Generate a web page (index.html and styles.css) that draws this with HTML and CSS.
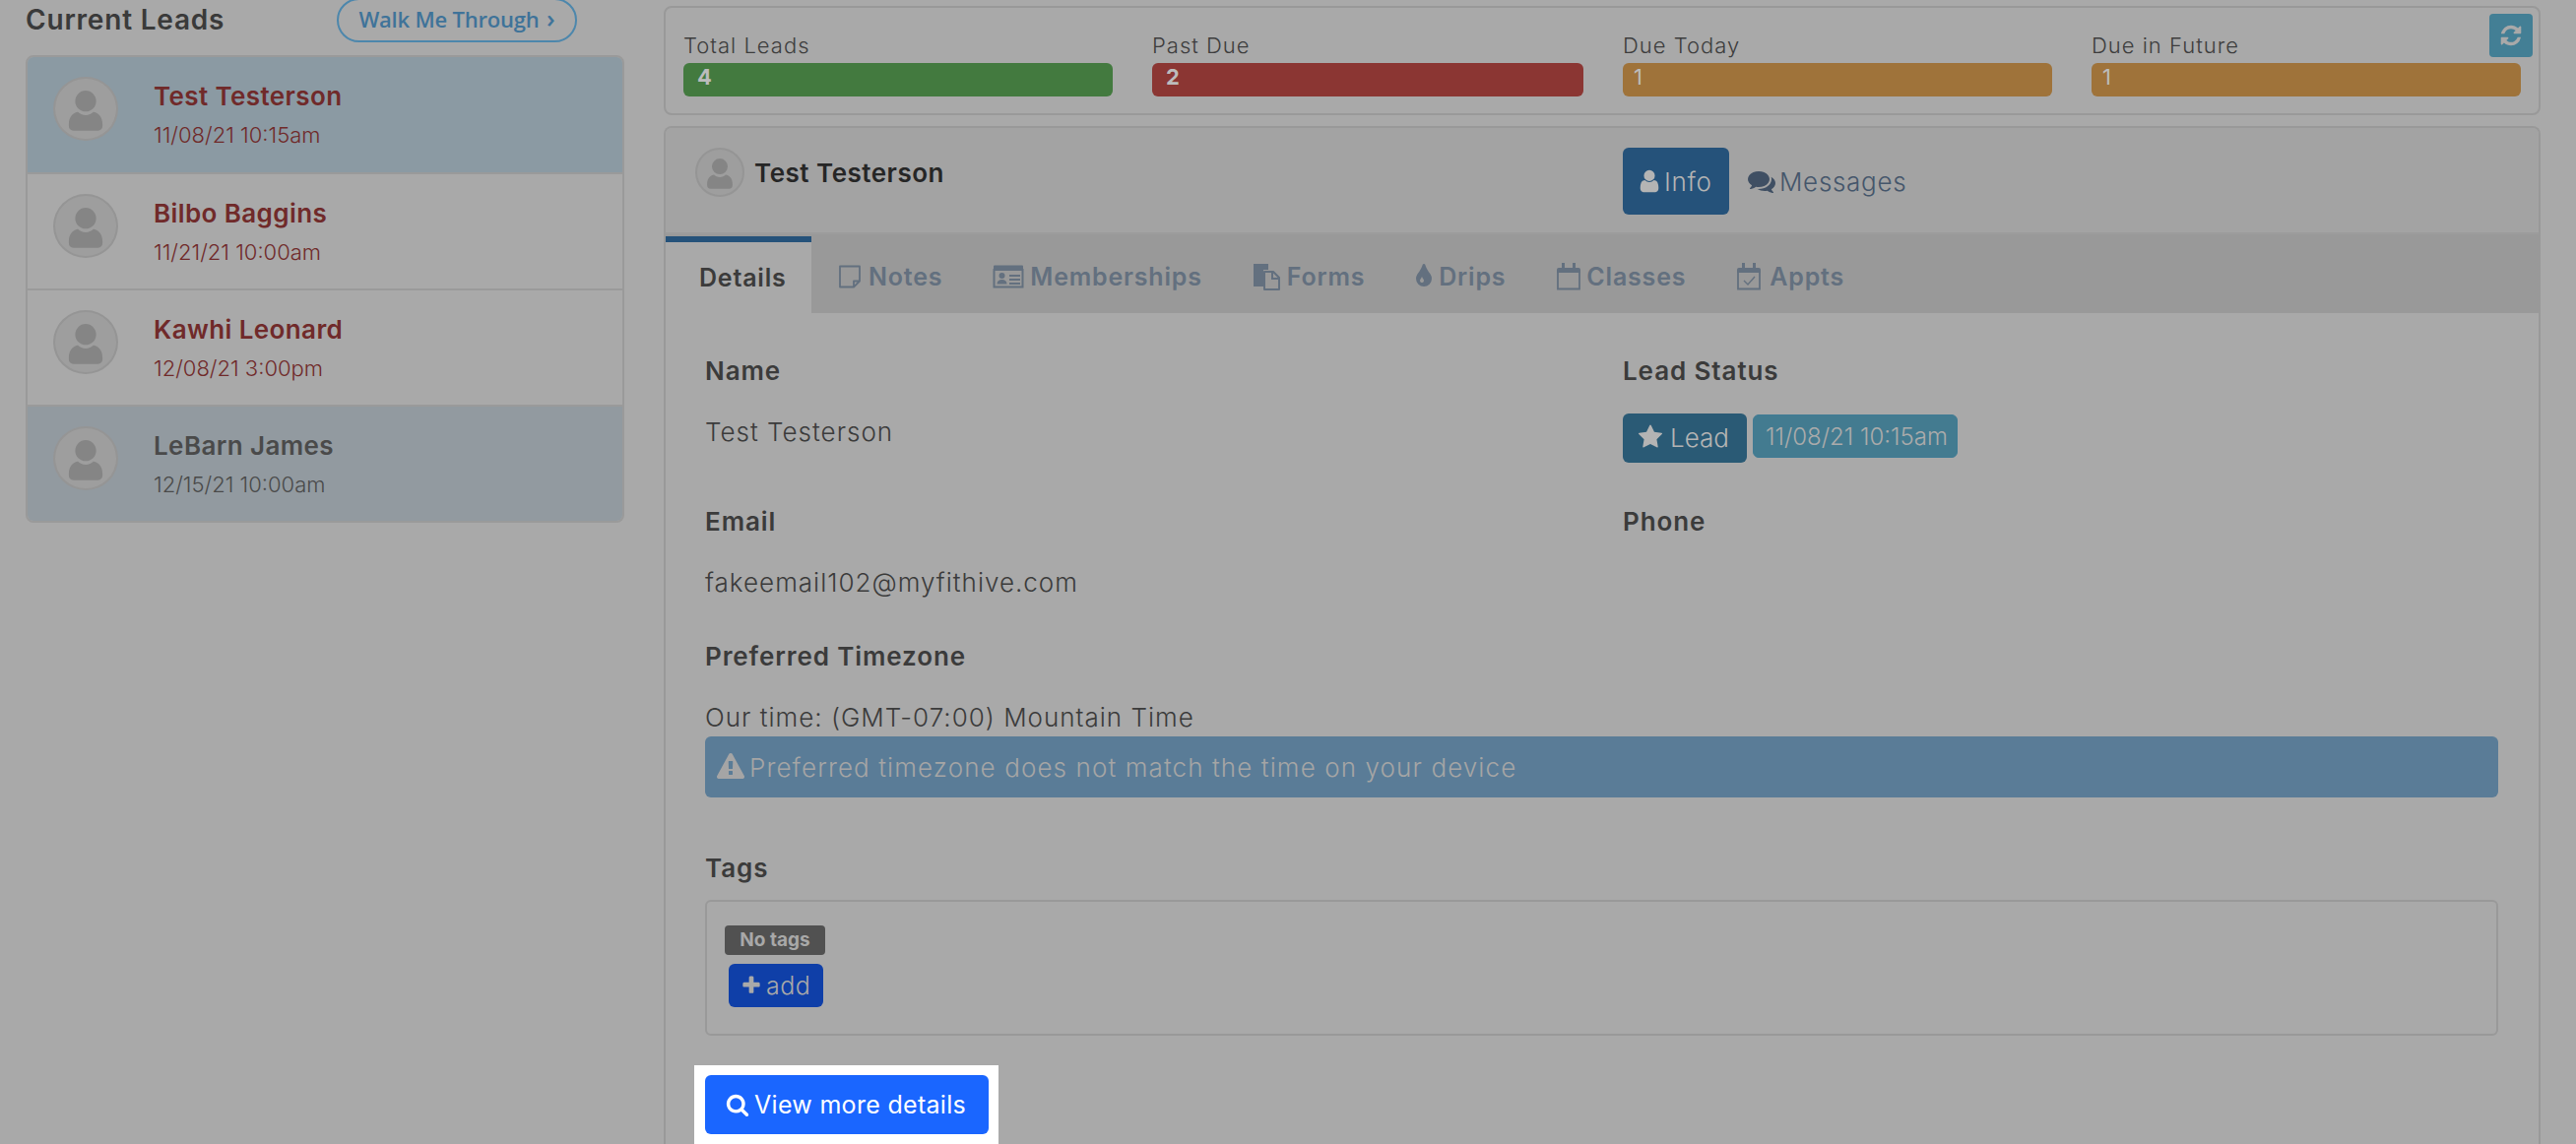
FILE: index.html
```html
<!DOCTYPE html>
<html lang="en">
<head>
<meta charset="utf-8">
<title>Current Leads</title>
<link rel="stylesheet" href="styles.css">
</head>
<body>
<svg class="defs" width="0" height="0" aria-hidden="true">
  <defs>
    <symbol id="i-user" viewBox="0 0 1792 1792"><path d="M1536 1399q0 109-62.5 187t-150.5 78h-854q-88 0-150.5-78t-62.5-187q0-85 8.5-160.5t31.5-152 58.5-131 94-89 134.5-34.5q131 128 313 128t313-128q76 0 134.5 34.5t94 89 58.5 131 31.5 152 8.5 160.5zm-256-887q0 159-112.5 271.5t-271.5 112.5-271.5-112.5-112.5-271.5 112.5-271.5 271.5-112.5 271.5 112.5 112.5 271.5z"/></symbol>
    <symbol id="i-comments" viewBox="0 0 1792 1792"><path d="M1408 768q0 139-94 257t-256.5 186.5-353.5 68.5q-86 0-176-16-124 88-278 128-36 9-86 16h-3q-11 0-20.5-8t-11.5-21q-1-3-1-6.5t.5-6.5 2-6l2.5-5 3.5-5.5 4-5 4.5-5 4-4.5q5-6 23-25t26-29.5 22.5-29 25-38.5 20.5-44q-124-72-195-177t-71-224q0-139 94-257t256.5-186.5 353.5-68.5 353.5 68.5 256.5 186.5 94 257zm384 256q0 120-71 224.5t-195 176.5q10 24 20.5 44t25 38.5 22.5 29 26 29.5 23 25q1 1 4 4.5t4.5 5 4 5 3.5 5.5l2.5 5 2 6 .5 6.5-1 6.5q-3 14-13 22t-22 7q-50-7-86-16-154-40-278-128-90 16-176 16-271 0-472-132 58 4 88 4 161 0 309-45t264-129q125-92 192-212t67-254q0-77-23-152 129 71 204 178t75 230z"/></symbol>
    <symbol id="i-star" viewBox="0 0 1792 1792"><path d="M1728 647q0 22-26 48l-363 354 86 500q1 7 1 20 0 21-10.5 35.5t-30.5 14.5q-19 0-40-12l-449-236-449 236q-22 12-40 12-21 0-31.5-14.5t-10.5-35.5q0-6 2-20l86-500-364-354q-25-27-25-48 0-37 56-46l502-73 225-455q19-41 49-41t49 41l225 455 502 73q56 9 56 46z"/></symbol>
    <symbol id="i-search" viewBox="0 0 1792 1792"><path d="M1216 832q0-185-131.5-316.5t-316.5-131.5-316.5 131.5-131.5 316.5 131.5 316.5 316.5 131.5 316.5-131.5 131.5-316.5zm512 832q0 52-38 90t-90 38q-54 0-90-38l-343-342q-179 124-399 124-143 0-273.5-55.5t-225-150-150-225-55.5-273.5 55.5-273.5 150-225 225-150 273.5-55.5 273.5 55.5 225 150 150 225 55.5 273.5q0 220-124 399l343 343q37 37 37 90z"/></symbol>
    <symbol id="i-plus" viewBox="0 0 1792 1792"><path d="M1600 736v192q0 40-28 68t-68 28h-416v416q0 40-28 68t-68 28h-192q-40 0-68-28t-28-68v-416h-416q-40 0-68-28t-28-68v-192q0-40 28-68t68-28h416v-416q0-40 28-68t68-28h192q40 0 68 28t28 68v416h416q40 0 68 28t28 68z"/></symbol>
    <symbol id="i-tint" viewBox="0 0 1792 1792"><path d="M896 1152q0-36-20-69-1-1-15.5-22.5t-25.5-38-25-44-21-50.5q-4-16-21-16t-21 16q-7 23-21 50.5t-25 44-25.5 38-15.5 22.5q-20 33-20 69 0 53 37.5 90.5t90.5 37.5 90.5-37.5 37.5-90.5zm512-128q0 212-150 362t-362 150-362-150-150-362q0-145 81-275 6-9 62.5-90.5t101-151 99.5-178 83-201.5q9-30 34-47t51-17 51.5 17 33.5 47q28 93 83 201.5t99.5 178 101 151 62.5 90.5q81 127 81 275z"/></symbol>
    <symbol id="i-warning" viewBox="0 0 1792 1792"><path d="M1024 1375v-190q0-14-9.5-23.5t-22.5-9.5h-192q-13 0-22.5 9.5t-9.5 23.5v190q0 14 9.5 23.5t22.5 9.5h192q13 0 22.5-9.5t9.5-23.5zm-2-374l18-459q0-12-10-19-13-11-24-11h-220q-11 0-24 11-10 7-10 21l17 457q0 10 10 16.5t24 6.5h185q14 0 23.5-6.5t10.5-16.5zm-14-934l768 1408q35 63-2 126-17 29-46.5 46t-63.5 17h-1536q-34 0-63.5-17t-46.5-46q-37-63-2-126l768-1408q17-31 47-49t65-18 65 18 47 49z"/></symbol>
    <symbol id="i-refresh" viewBox="0 0 1792 1792"><path d="M1639 1056q0 5-1 7-64 268-268 434.5t-478 166.5q-146 0-282.5-55t-243.5-157l-129 129q-19 19-45 19t-45-19-19-45v-448q0-26 19-45t45-19h448q26 0 45 19t19 45-19 45l-137 137q71 66 161 102t187 36q134 0 250-65t186-179q11-17 53-117 8-23 30-23h192q13 0 22.5 9.5t9.5 22.5zm25-800v448q0 26-19 45t-45 19h-448q-26 0-45-19t-19-45 19-45l138-138q-148-137-349-137-134 0-250 65t-186 179q-11 17-53 117-8 23-30 23h-199q-13 0-22.5-9.5t-9.5-22.5v-7q65-268 270-434.5t480-166.5q146 0 284 55.5t245 156.5l130-129q19-19 45-19t45 19 19 45z"/></symbol>
    <symbol id="i-note" viewBox="0 0 24 24"><path d="M2 1.500h20v15l-6 6H2z M22 16.500h-6v6" fill="none" stroke="currentColor" stroke-width="1.800" stroke-linejoin="round"/></symbol>
    <symbol id="i-card" viewBox="0 0 32 24"><path d="M1.500 5h29v17.500h-29z" fill="none" stroke="currentColor" stroke-width="2"/><path d="M1 1.500a1 1 0 0 1 1-1h28a1 1 0 0 1 1 1V5H1z"/><circle cx="9.500" cy="11" r="3"/><path d="M4.500 19.500c0-3 2-4.500 5-4.500s5 1.500 5 4.500zM17 10h11v2H17zM17 14h11v2H17zM17 18h11v2H17z"/></symbol>
    <symbol id="i-files" viewBox="0 0 28 28"><path d="M1 1h15v6H11v17H1z"/><path d="M12 9h9l6 6v12H12z" fill="none" stroke="currentColor" stroke-width="2" stroke-linejoin="round"/><path d="M20 9v7h7" fill="none" stroke="currentColor" stroke-width="2"/></symbol>
    <symbol id="i-cal" viewBox="0 0 26 28"><path d="M1 7a2 2 0 0 1 2-2h20a2 2 0 0 1 2 2v3H1z"/><path d="M2 9h22v17.500H2z" fill="none" stroke="currentColor" stroke-width="1.800"/><path d="M6 0h3v7H6zM17 0h3v7h-3z"/></symbol>
    <symbol id="i-calc" viewBox="0 0 26 28"><path d="M1 7a2 2 0 0 1 2-2h20a2 2 0 0 1 2 2v3H1z"/><path d="M2 9h22v17.500H2z" fill="none" stroke="currentColor" stroke-width="1.800"/><path d="M6 0h3v7H6zM17 0h3v7h-3z"/><path d="M8 18l4 4 7-8" fill="none" stroke="currentColor" stroke-width="1.400"/></symbol>
    <symbol id="i-avatar" viewBox="0 0 66 66"><path d="M33 13a11.500 11.500 0 1 1 0 23a11.500 11.500 0 0 1 0-23zM14.500 50c0-9 5.500-13 10-13.500c2 2 5 3.500 8.500 3.500s6.500-1.500 8.500-3.500c4.500.5 10 4.500 10 13.500v2c0 3-2 5-5 5h-27c-3 0-5-2-5-5z"/></symbol>
  </defs>
</svg>

<div class="page">
  <aside class="sidebar">
    <header class="side-head">
      <h2 class="side-title">Current Leads</h2>
      <button class="walk-btn">Walk Me Through <span class="walk-chev">&#8250;</span></button>
    </header>
    <ul class="lead-list">
      <li class="lead lead-first lead-blue">
        <span class="avatar"><svg class="avatar-svg"><use href="#i-avatar"/></svg></span>
        <div class="lead-text lead-red"><div class="lead-name">Test Testerson</div><div class="lead-date">11/08/21 10:15am</div></div>
      </li>
      <li class="lead">
        <span class="avatar"><svg class="avatar-svg"><use href="#i-avatar"/></svg></span>
        <div class="lead-text lead-red"><div class="lead-name">Bilbo Baggins</div><div class="lead-date">11/21/21 10:00am</div></div>
      </li>
      <li class="lead">
        <span class="avatar"><svg class="avatar-svg"><use href="#i-avatar"/></svg></span>
        <div class="lead-text lead-red"><div class="lead-name">Kawhi Leonard</div><div class="lead-date">12/08/21 3:00pm</div></div>
      </li>
      <li class="lead lead-gray">
        <span class="avatar"><svg class="avatar-svg"><use href="#i-avatar"/></svg></span>
        <div class="lead-text"><div class="lead-name">LeBarn James</div><div class="lead-date">12/15/21 10:00am</div></div>
      </li>
    </ul>
  </aside>

  <main class="main">
    <section class="stats">
      <div class="stat"><div class="stat-label">Total Leads</div><div class="stat-bar bar-green">4</div></div>
      <div class="stat stat-wide"><div class="stat-label">Past Due</div><div class="stat-bar bar-red">2</div></div>
      <div class="stat"><div class="stat-label">Due Today</div><div class="stat-bar bar-orange">1</div></div>
      <div class="stat"><div class="stat-label">Due in Future</div><div class="stat-bar bar-orange">1</div></div>
      <button class="refresh" aria-label="Refresh"><svg class="ic-refresh"><use href="#i-refresh"/></svg></button>
    </section>

    <section class="card">
      <header class="card-head">
        <div class="person">
          <span class="avatar avatar-sm"><svg class="avatar-svg"><use href="#i-avatar"/></svg></span>
          <span class="person-name">Test Testerson</span>
        </div>
        <nav class="pills">
          <a class="pill pill-on"><svg class="ic-pill"><use href="#i-user"/></svg>Info</a>
          <a class="pill"><svg class="ic-pill ic-msg"><use href="#i-comments"/></svg>Messages</a>
        </nav>
      </header>

      <nav class="tabs">
        <a class="tab tab-on">Details</a>
        <a class="tab"><svg class="ic-tab ic-note"><use href="#i-note"/></svg>Notes</a>
        <a class="tab"><svg class="ic-tab ic-card"><use href="#i-card"/></svg>Memberships</a>
        <a class="tab"><svg class="ic-tab ic-files"><use href="#i-files"/></svg>Forms</a>
        <a class="tab"><svg class="ic-tab ic-tint"><use href="#i-tint"/></svg>Drips</a>
        <a class="tab"><svg class="ic-tab ic-cal"><use href="#i-cal"/></svg>Classes</a>
        <a class="tab"><svg class="ic-tab ic-cal ic-calc"><use href="#i-calc"/></svg>Appts</a>
      </nav>

      <div class="pane">
        <div class="fields">
          <div class="field field-a">
            <div class="label">Name</div>
            <div class="value">Test Testerson</div>
          </div>
          <div class="field field-a">
            <div class="label">Lead Status</div>
            <div class="status">
              <span class="status-btn"><svg class="ic-star"><use href="#i-star"/></svg>Lead</span>
              <span class="status-date">11/08/21 10:15am</span>
            </div>
          </div>
          <div class="field field-b">
            <div class="label">Email</div>
            <div class="value">fakeemail102@myfithive.com</div>
          </div>
          <div class="field field-b">
            <div class="label">Phone</div>
          </div>
        </div>

        <div class="label">Preferred Timezone</div>
        <div class="value">Our time: (GMT-07:00) Mountain Time</div>
        <div class="alert"><svg class="ic-warn"><use href="#i-warning"/></svg>Preferred timezone does not match the time on your device</div>

        <div class="label label-tags">Tags</div>
        <div class="tags-box">
          <span class="no-tags">No tags</span>
          <a class="add-btn"><svg class="ic-plus"><use href="#i-plus"/></svg>add</a>
        </div>

        <div class="spot">
          <a class="more-btn"><svg class="ic-search"><use href="#i-search"/></svg>View more details</a>
        </div>
      </div>
    </section>
  </main>
</div>
</body>
</html>
```

FILE: styles.css
```css
* { box-sizing: border-box; }
html, body { margin: 0; padding: 0; height: 1162px; overflow: hidden; }
body {
  background: #a9a9a9;
  color: #3b3b3b;
  font-family: Inter, "Noto Sans", "DejaVu Sans", sans-serif;
}
.defs { position: absolute; }
svg { fill: currentColor; display: inline-block; flex: none; }
a { display: inline-flex; align-items: center; }

.page { display: flex; align-items: flex-start; height: 1162px; }

/* Sidebar */
.sidebar { width: 674px; flex: none; padding: 0 40px 0 26px; }
.side-head { display: flex; align-items: flex-start; height: 56px; }
.side-title {
  margin: 4px 0 0;
  width: 316px;
  flex: none;
  font-size: 28px;
  line-height: 32px;
  font-weight: 600;
  letter-spacing: 0.8px;
  color: #3a3a3a;
}
.walk-btn {
  margin-top: -2px;
  width: 244px;
  height: 45px;
  padding: 0 0 6px;
  border: 2px solid #4d87ac;
  border-radius: 23px;
  background: transparent;
  color: #3f7399;
  font-family: "Open Sans", sans-serif;
  font-size: 22px;
  font-weight: 600;
  letter-spacing: -0.2px;
}
.walk-chev { font-size: 26px; font-weight: 600; margin-left: 2px; }

.lead-list {
  list-style: none;
  margin: 0;
  padding: 0;
  width: 608px;
  border: 2px solid #9a9a9a;
  border-radius: 8px;
  overflow: hidden;
}
.lead {
  display: flex;
  height: 118px;
  padding: 20px 0 0 26px;
  border-top: 2px solid #9a9a9a;
}
.lead-first { height: 117px; border-top: 0; }
.lead-blue { background: #8b9aa3; }
.lead-gray { background: #929aa0; }

.avatar {
  display: flex;
  align-items: center;
  justify-content: center;
  width: 66px;
  height: 65px;
  flex: none;
  border: 2px solid #959595;
  border-radius: 50%;
  background: #9e9e9e;
  color: #858585;
}
.avatar-svg { width: 62px; height: 61px; }
.avatar-sm { width: 50px; height: 50px; }
.avatar-sm .avatar-svg { width: 46px; height: 46px; }

.lead-text { margin-left: 36px; color: #4a4a4a; }
.lead-red { color: #702a2a; }
.lead-name { font-size: 26px; line-height: 32px; font-weight: 600; letter-spacing: 0.4px; margin-top: 4px; }
.lead-date { font-size: 22px; line-height: 28px; font-weight: 300; margin-top: 9px; }

/* Main */
.main { width: 1906px; flex: none; padding-top: 6px; }
.stats {
  position: relative;
  display: flex;
  gap: 40px;
  height: 111px;
  padding: 0 18px;
  border: 2px solid #999;
  border-radius: 8px;
}
.stat { width: 436px; flex: none; padding-top: 23px; }
.stat-wide { width: 438px; }
.stat-label { font-size: 22px; line-height: 30px; margin-bottom: 3px; font-weight: 300; letter-spacing: 1px; color: #3d3d3d; }
.stat-bar {
  height: 34px;
  padding: 0 14px;
  border-radius: 6px;
  color: #bcbcbc;
  font-size: 22px;
  line-height: 28px;
  font-weight: 700;
}
.bar-green { background: #437a3f; }
.bar-red { background: #8b3633; }
.bar-orange { background: #9f733a; font-weight: 400; padding: 0 11px; }
.refresh {
  position: absolute;
  top: 6px;
  right: 6px;
  display: flex;
  align-items: center;
  justify-content: center;
  width: 44px;
  height: 44px;
  padding: 0;
  border: 0;
  border-radius: 4px;
  background: #437f95;
  color: #a9a9a9;
}
.ic-refresh { width: 24px; height: 24px; }

.card {
  margin-top: 11px;
  border: 2px solid #999;
  border-bottom: 0;
  border-radius: 8px 8px 0 0;
  height: 1040px;
}
.card-head {
  display: flex;
  height: 108px;
  background: #a3a3a3;
  border-radius: 6px 6px 0 0;
  border-bottom: 2px solid #9c9c9c;
  padding: 20px 0 0 30px;
}
.person { display: flex; width: 942px; flex: none; align-items: center; height: 50px; }
.person-name { margin-left: 10px; font-size: 26px; font-weight: 600; letter-spacing: 0.5px; color: #262626; }
.pills { display: flex; align-items: center; height: 68px; }
.pill {
  height: 68px;
  padding: 0 19px;
  font-size: 26px;
  font-weight: 300;
  color: #45566b;
  border-radius: 6px;
  letter-spacing: 0.7px;
}
.pill-on { background: #25527a; color: #b4b4b4; width: 108px; padding: 0 0 0 14px; }
.ic-pill { width: 26px; height: 26px; margin-right: 2px; }
.ic-msg { width: 28px; height: 28px; margin-right: 4px; color: #3f4f63; }

.tabs { display: flex; align-items: flex-end; height: 80px; background: #999; }
.tab {
  height: 80px;
  padding: 6px 25px 0;
  font-size: 25px;
  font-weight: 600;
  letter-spacing: 0.8px;
  color: #63707f;
  margin-right: 1px;
}
.tab-on {
  width: 148px;
  height: 78px;
  margin-right: 2px;
  padding: 0 0 0 34px;
  background: #a9a9a9;
  border-top: 6px solid #25527a;
  color: #3b3b3b;
}
.ic-tab { margin-right: 7px; }
.ic-note { width: 24px; height: 24px; }
.ic-card { width: 32px; height: 24px; margin-right: 6px; }
.ic-files { width: 28px; height: 28px; }
.ic-tint { width: 28px; height: 28px; margin: 0 1px 0 -5px; }
.ic-cal { width: 26px; height: 28px; margin-right: 5px; }
.ic-calc { margin-right: 8px; }

.pane { padding: 44px 41px 0 40px; }
.fields { display: grid; grid-template-columns: 932px 1fr; }
.field-a { height: 153px; }
.field-b { height: 137px; }
.label { font-size: 26px; line-height: 30px; font-weight: 600; letter-spacing: 0.9px; color: #3b3b3b; }
.value { margin-top: 32px; font-size: 26px; line-height: 30px; font-weight: 300; letter-spacing: 1px; color: #3b3b3b; }

.status { display: flex; align-items: center; margin-top: 28px; height: 50px; }
.status-btn {
  display: inline-flex;
  align-items: center;
  width: 126px;
  height: 50px;
  padding: 0 0 2px 15px;
  border-radius: 6px;
  background: #2a5a75;
  color: #b4b4b4;
  font-size: 26px;
  font-weight: 300;
}
.ic-star { width: 26px; height: 26px; margin-right: 7px; }
.status-date {
  display: inline-flex;
  align-items: center;
  margin: -4px 0 0 6px;
  width: 208px;
  height: 44px;
  padding-left: 12px;
  border-radius: 6px;
  background: #437b90;
  border: 1px solid #3f7b94;
  color: #ababab;
  font-size: 24px;
  font-weight: 300;
  white-space: nowrap;
}

.alert {
  display: flex;
  align-items: center;
  margin-top: 4px;
  height: 62px;
  padding-left: 12px;
  border-radius: 6px;
  background: #5a7c97;
  color: #a5a5a5;
  font-size: 26px;
  font-weight: 300;
  letter-spacing: 1.1px;
}
.ic-warn { width: 28px; height: 28px; margin-right: 5px; }

.label-tags { margin-top: 57px; }
.tags-box {
  display: flex;
  flex-direction: column;
  align-items: flex-start;
  margin-top: 17px;
  height: 138px;
  padding: 24px 18px 0;
  border: 2px solid #999;
  border-radius: 6px;
}
.no-tags {
  display: block;
  height: 30px;
  width: 102px;
  border-radius: 4px;
  background: #515151;
  color: #a8a8a8;
  font-size: 19px;
  line-height: 29px;
  font-weight: 700;
  text-align: center;
}
.add-btn {
  margin: 9px 0 0 4px;
  width: 96px;
  height: 44px;
  padding-left: 12px;
  border-radius: 6px;
  background: #0f3fa8;
  color: #a9a9a9;
  font-size: 25px;
  font-weight: 300;
  letter-spacing: 0.5px;
}
.ic-plus { width: 22px; height: 22px; margin-right: 4px; }

.spot {
  display: inline-block;
  margin: 30px 0 0 -11px;
  padding: 10px 10px 10px 11px;
  background: #fff;
}
.more-btn {
  width: 288px;
  height: 60px;
  padding-left: 21px;
  border-radius: 6px;
  background: #1a66ff;
  color: #fff;
  font-size: 25px;
  font-weight: 400;
  letter-spacing: 0.3px;
  white-space: nowrap;
}
.ic-search { width: 24px; height: 24px; margin-right: 5px; }
```
